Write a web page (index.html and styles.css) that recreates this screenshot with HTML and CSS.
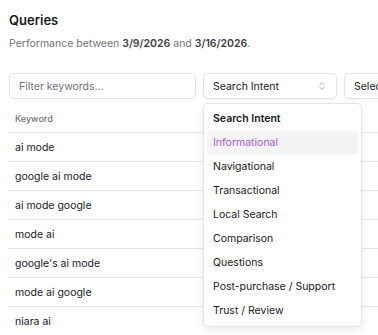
FILE: index.html
```html
<!DOCTYPE html>
<html lang="en">
<head>
    <meta charset="UTF-8">
    <meta name="viewport" content="width=device-width, initial-scale=1.0">
    <title>Queries</title>
    <link rel="stylesheet" href="styles.css">
</head>
<body>
    <div class="panel">
        <h2 class="title">Queries</h2>
        <p class="subtitle">Performance between <b>3/9/2026</b> and <b>3/16/2026</b>.</p>

        <div class="controls">
            <input type="text" class="filter-input" placeholder="Filter keywords...">
            <div class="select-wrap">
                <button class="select-btn">
                    <span>Search Intent</span>
                    <svg class="chevrons" width="8" height="10" viewBox="0 0 8 10" fill="none" stroke="#9ca3af" stroke-width="1" stroke-linecap="round" stroke-linejoin="round">
                        <path d="M2 3.5 L4 1.5 L6 3.5"/>
                        <path d="M2 6.5 L4 8.5 L6 6.5"/>
                    </svg>
                </button>
                <div class="dropdown">
                    <div class="dropdown-label">Search Intent</div>
                    <div class="dropdown-item active">Informational</div>
                    <div class="dropdown-item">Navigational</div>
                    <div class="dropdown-item">Transactional</div>
                    <div class="dropdown-item">Local Search</div>
                    <div class="dropdown-item">Comparison</div>
                    <div class="dropdown-item">Questions</div>
                    <div class="dropdown-item">Post-purchase / Support</div>
                    <div class="dropdown-item">Trust / Review</div>
                </div>
            </div>
            <button class="select-btn">
                <span>Select</span>
            </button>
        </div>

        <table class="queries-table">
            <thead>
                <tr><th>Keyword</th></tr>
            </thead>
            <tbody>
                <tr><td>ai mode</td></tr>
                <tr><td>google ai mode</td></tr>
                <tr><td>ai mode google</td></tr>
                <tr><td>mode ai</td></tr>
                <tr><td>google's ai mode</td></tr>
                <tr><td>mode ai google</td></tr>
                <tr><td>niara ai</td></tr>
            </tbody>
        </table>
    </div>
</body>
</html>
```

FILE: styles.css
```css
body {
    margin: 0;
    font-family: Inter, 'Noto Sans', sans-serif;
    color: #18181b;
    background-color: #fff;
    overflow: hidden;
}
.panel {
    padding: 10px 0 0 9px;
}
.title {
    margin: 0;
    font-size: 13px;
    font-weight: 600;
    line-height: 20px;
}
.subtitle {
    margin: 6px 0 0;
    font-size: 10.5px;
    line-height: 16px;
    color: #71717a;
}
.subtitle b {
    color: #3f3f46;
    font-weight: 600;
}
.controls {
    display: flex;
    gap: 7px;
    margin-top: 21px;
}
.filter-input {
    flex: none;
    box-sizing: border-box;
    width: 187px;
    height: 26px;
    padding: 0 9px;
    border: 1px solid #e4e4e7;
    border-radius: 5px;
    font-family: inherit;
    font-size: 10.5px;
    color: #18181b;
    box-shadow: 0 1px 2px rgba(0,0,0,0.04);
}
.filter-input::placeholder {
    color: #71717a;
}
.select-wrap {
    position: relative;
    flex: none;
}
.select-btn {
    flex: none;
    box-sizing: border-box;
    display: flex;
    align-items: center;
    justify-content: space-between;
    width: 134px;
    height: 26px;
    padding: 0 10px 0 9px;
    border: 1px solid #e4e4e7;
    border-radius: 5px;
    background: #fff;
    font-family: inherit;
    font-size: 10.5px;
    color: #18181b;
    white-space: nowrap;
    overflow: hidden;
    box-shadow: 0 1px 2px rgba(0,0,0,0.04);
}
.dropdown {
    position: absolute;
    top: 30px;
    left: 0;
    width: 159px;
    box-sizing: border-box;
    padding: 3px;
    border: 1px solid #e4e4e7;
    border-radius: 5px;
    background: #fff;
    box-shadow: 0 3px 8px rgba(0,0,0,0.08);
    z-index: 10;
}
.dropdown-label,
.dropdown-item {
    height: 24px;
    line-height: 24px;
    padding: 0 6px;
    font-size: 10.5px;
    border-radius: 3px;
}
.dropdown-label {
    font-weight: 600;
}
.dropdown-item.active {
    background-color: #f4f4f5;
    color: #a35bd8;
}
.queries-table {
    width: calc(100% + 1px);
    margin: 5px 0 0 -1px;
    border-collapse: collapse;
}
.queries-table th {
    height: 28px;
    padding: 0 7px;
    text-align: left;
    font-size: 9px;
    font-weight: 500;
    color: #71717a;
    border-bottom: 1px solid #e4e4e7;
}
.queries-table td {
    height: 28px;
    padding: 0 7px;
    font-size: 10.5px;
    border-bottom: 1px solid #e4e4e7;
}
```
